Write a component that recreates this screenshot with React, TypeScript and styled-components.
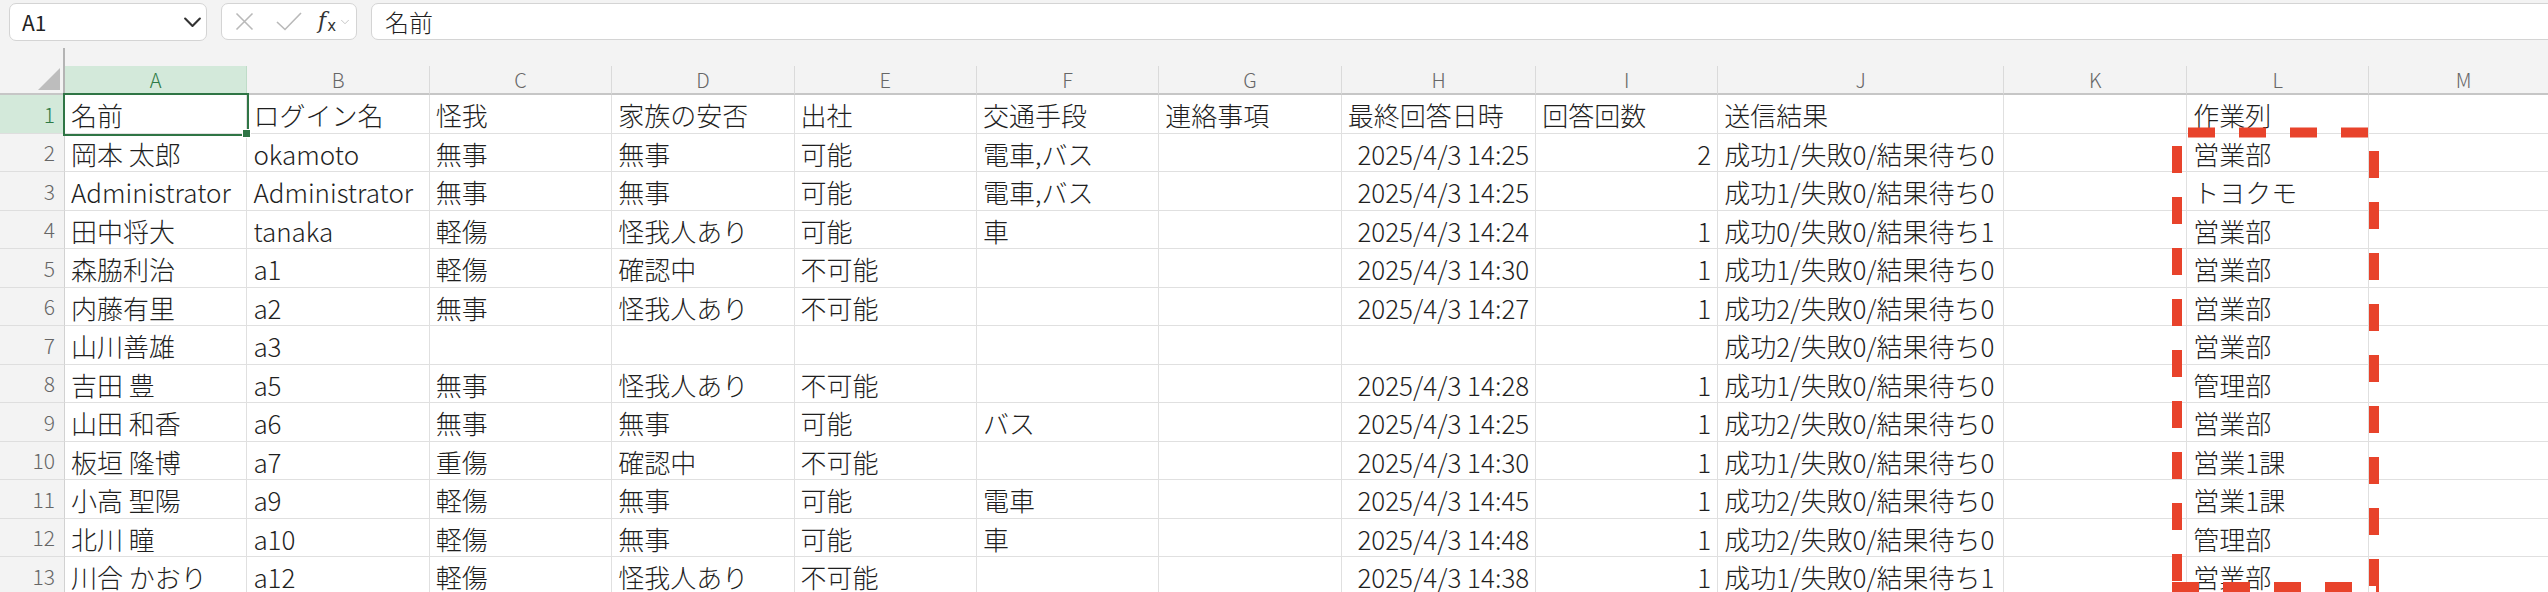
import { FC } from 'react'
import styled, { createGlobalStyle, css } from 'styled-components'

const colors = {
  chrome: '#f3f3f3',
  boxBorder: '#d4d4d4',
  grid: '#e0e0e0',
  headerLine: '#c6c6c6',
  headerText: '#666666',
  text: '#1f1f1f',
  selectBg: '#d3e9da',
  selectText: '#2d7a46',
  selectLine: '#2f7545',
  mark: '#e8432b',
}

const GlobalStyle = createGlobalStyle`
  html, body {
    margin: 0;
    padding: 0;
    background: ${colors.chrome};
  }
  body {
    font-family: "Noto Sans CJK JP", "Noto Sans", sans-serif;
    color: ${colors.text};
  }
`

const COLUMNS = [
  { key: 'A', width: 182.4 },
  { key: 'B', width: 182.4 },
  { key: 'C', width: 182.4 },
  { key: 'D', width: 182.4 },
  { key: 'E', width: 182.4 },
  { key: 'F', width: 182.4 },
  { key: 'G', width: 182.4 },
  { key: 'H', width: 194.5 },
  { key: 'I', width: 182 },
  { key: 'J', width: 286 },
  { key: 'K', width: 183 },
  { key: 'L', width: 182 },
  { key: 'M', width: 190 },
]

const ROWS: string[][] = [
  ['名前', 'ログイン名', '怪我', '家族の安否', '出社', '交通手段', '連絡事項', '最終回答日時', '回答回数', '送信結果', '', '作業列', ''],
  ['岡本 太郎', 'okamoto', '無事', '無事', '可能', '電車,バス', '', '2025/4/3 14:25', '2', '成功1/失敗0/結果待ち0', '', '営業部', ''],
  ['Administrator', 'Administrator', '無事', '無事', '可能', '電車,バス', '', '2025/4/3 14:25', '', '成功1/失敗0/結果待ち0', '', 'トヨクモ', ''],
  ['田中将大', 'tanaka', '軽傷', '怪我人あり', '可能', '車', '', '2025/4/3 14:24', '1', '成功0/失敗0/結果待ち1', '', '営業部', ''],
  ['森脇利治', 'a1', '軽傷', '確認中', '不可能', '', '', '2025/4/3 14:30', '1', '成功1/失敗0/結果待ち0', '', '営業部', ''],
  ['内藤有里', 'a2', '無事', '怪我人あり', '不可能', '', '', '2025/4/3 14:27', '1', '成功2/失敗0/結果待ち0', '', '営業部', ''],
  ['山川善雄', 'a3', '', '', '', '', '', '', '', '成功2/失敗0/結果待ち0', '', '営業部', ''],
  ['吉田 豊', 'a5', '無事', '怪我人あり', '不可能', '', '', '2025/4/3 14:28', '1', '成功1/失敗0/結果待ち0', '', '管理部', ''],
  ['山田 和香', 'a6', '無事', '無事', '可能', 'バス', '', '2025/4/3 14:25', '1', '成功2/失敗0/結果待ち0', '', '営業部', ''],
  ['板垣 隆博', 'a7', '重傷', '確認中', '不可能', '', '', '2025/4/3 14:30', '1', '成功1/失敗0/結果待ち0', '', '営業1課', ''],
  ['小高 聖陽', 'a9', '軽傷', '無事', '可能', '電車', '', '2025/4/3 14:45', '1', '成功2/失敗0/結果待ち0', '', '営業1課', ''],
  ['北川 瞳', 'a10', '軽傷', '無事', '可能', '車', '', '2025/4/3 14:48', '1', '成功2/失敗0/結果待ち0', '', '管理部', ''],
  ['川合 かおり', 'a12', '軽傷', '怪我人あり', '不可能', '', '', '2025/4/3 14:38', '1', '成功1/失敗0/結果待ち1', '', '営業部', ''],
]

const isNumeric = (value: string) => /^[\d/ :]+$/.test(value)

const StyledRoot = styled.div`
  position: relative;
  width: 2548px;
  height: 592px;
  overflow: hidden;
  background: ${colors.chrome};
`

/* formula bar */

const StyledToolbar = styled.div`
  display: flex;
  align-items: flex-start;
  gap: 14px;
  height: 48px;
  padding: 3px 0 0 9px;
  box-sizing: border-box;
`

const StyledBox = styled.div`
  display: flex;
  align-items: center;
  height: 38px;
  box-sizing: border-box;
  background: #ffffff;
  border: 1px solid ${colors.boxBorder};
  border-radius: 7px;
`

const StyledNameBox = styled(StyledBox)`
  width: 198px;
  justify-content: space-between;
  padding: 0 5px 0 12px;
  font-size: 21px;
  color: #222222;
`

const StyledFormulaButtons = styled(StyledBox)`
  width: 136px;
  height: 37px;
  padding: 0 0 0 13px;
  gap: 22px;
`

const StyledFx = styled.span`
  display: flex;
  align-items: center;
  gap: 5px;
  margin-left: -6px;
  color: #333333;

  span {
    font-family: "DejaVu Serif", serif;
    font-style: italic;
    font-size: 22px;
    line-height: 1;
  }

  sub {
    font-family: "DejaVu Sans", sans-serif;
    font-style: normal;
    font-size: 15px;
    vertical-align: -3px;
    margin-left: 1px;
  }
`

const StyledFormulaInput = styled(StyledBox)`
  flex: 1;
  height: 37px;
  margin-right: -20px;
  padding-left: 13px;
  font-size: 24px;
  font-weight: 300;
`

const StyledSplitRow = styled.div`
  height: 18px;
  padding-left: 63px;
`

const StyledSplitBar = styled.div`
  width: 2px;
  height: 100%;
  background: #b4b4b4;
`

/* sheet */

const StyledSheet = styled.div`
  display: grid;
  grid-template-columns: 65px ${COLUMNS.map((c) => `${c.width}px`).join(' ')};
  grid-template-rows: 29px;
  grid-auto-rows: 38.5px;
`

const StyledCorner = styled.div`
  position: relative;
  background: ${colors.chrome};
  border-right: 2px solid #b4b4b4;
  border-bottom: 2px solid ${colors.headerLine};
  box-sizing: border-box;

  &::after {
    content: '';
    position: absolute;
    right: 3px;
    bottom: 3px;
    border-style: solid;
    border-width: 0 0 22px 22px;
    border-color: transparent transparent #bdbdbd transparent;
  }
`

const StyledColHeader = styled.div<{ $selected?: boolean }>`
  display: flex;
  align-items: center;
  justify-content: center;
  box-sizing: border-box;
  font-size: 20px;
  font-weight: 300;
  color: ${colors.headerText};
  background: ${colors.chrome};
  border-right: 1px solid #dadada;
  border-bottom: 2px solid ${colors.headerLine};

  ${({ $selected }) =>
    $selected &&
    css`
      background: ${colors.selectBg};
      color: ${colors.selectText};
      border-right-color: #bfdcc8;
    `}
`

const StyledRowHeader = styled.div<{ $selected?: boolean }>`
  display: flex;
  align-items: center;
  justify-content: flex-end;
  padding-right: 9px;
  box-sizing: border-box;
  font-size: 21px;
  font-weight: 300;
  color: ${colors.headerText};
  background: ${colors.chrome};
  border-right: 1px solid #d2d2d2;
  border-bottom: 1px solid #dedede;

  ${({ $selected }) =>
    $selected &&
    css`
      background: ${colors.selectBg};
      color: ${colors.selectText};
    `}
`

const StyledCell = styled.div<{ $align: 'left' | 'right'; $selected?: boolean }>`
  position: relative;
  display: flex;
  align-items: center;
  justify-content: ${({ $align }) => ($align === 'right' ? 'flex-end' : 'flex-start')};
  padding: 2px 6px 0;
  box-sizing: border-box;
  background: #ffffff;
  border-right: 1px solid ${colors.grid};
  border-bottom: 1px solid ${colors.grid};
  font-size: 26px;
  font-weight: 300;
  white-space: nowrap;
  color: ${colors.text};

  ${({ $selected }) =>
    $selected &&
    css`
      z-index: 2;
      outline: 2px solid ${colors.selectLine};

      &::after {
        content: '';
        position: absolute;
        right: -5px;
        bottom: -5px;
        width: 7px;
        height: 7px;
        background: ${colors.selectLine};
        border: 1px solid #ffffff;
      }
    `}
`

const StyledMarker = styled.svg`
  position: absolute;
  top: 0;
  left: 0;
  z-index: 5;
  pointer-events: none;
`

const ChevronIcon: FC<{ color: string; size: number; stroke: number }> = ({ color, size, stroke }) => (
  <svg width={size} height={size / 2 + 2} viewBox="0 0 16 10" fill="none">
    <path d="M1 1.5 L8 8.5 L15 1.5" stroke={color} strokeWidth={stroke} strokeLinecap="round" strokeLinejoin="round" />
  </svg>
)

const FormulaBar: FC = () => (
  <StyledToolbar>
    <StyledNameBox>
      A1
      <ChevronIcon color="#333333" size={17} stroke={2} />
    </StyledNameBox>
    <StyledFormulaButtons>
      <svg width="19" height="19" viewBox="0 0 19 19" fill="none">
        <path d="M1.5 1.5 L17.5 17.5 M17.5 1.5 L1.5 17.5" stroke="#b9b9b9" strokeWidth="1.6" />
      </svg>
      <svg width="26" height="19" viewBox="0 0 26 19" fill="none">
        <path d="M1 10 L9 17.5 L25 1" stroke="#b9b9b9" strokeWidth="1.6" />
      </svg>
      <StyledFx>
        <span>
          f<sub>x</sub>
        </span>
        <ChevronIcon color="#b9b9b9" size={8} stroke={1.6} />
      </StyledFx>
    </StyledFormulaButtons>
    <StyledFormulaInput>名前</StyledFormulaInput>
  </StyledToolbar>
)

const Marker: FC = () => (
  <StyledMarker width={2548} height={592} viewBox="0 0 2548 592">
    <g stroke={colors.mark} strokeWidth={10} strokeDasharray="27 24" fill="none">
      <line x1={2188} y1={132.5} x2={2379} y2={132.5} />
      <line x1={2177} y1={146} x2={2177} y2={592} />
      <line x1={2374} y1={151} x2={2374} y2={592} />
      <line x1={2172} y1={587} x2={2379} y2={587} />
    </g>
  </StyledMarker>
)

const App: FC = () => (
  <StyledRoot>
    <GlobalStyle />
    <FormulaBar />
    <StyledSplitRow>
      <StyledSplitBar />
    </StyledSplitRow>
    <StyledSheet>
      <StyledCorner />
      {COLUMNS.map((c) => (
        <StyledColHeader key={c.key} $selected={c.key === 'A'}>
          {c.key}
        </StyledColHeader>
      ))}
      {ROWS.map((row, r) => [
        <StyledRowHeader key={`h${r}`} $selected={r === 0}>
          {r + 1}
        </StyledRowHeader>,
        ...row.map((value, c) => (
          <StyledCell
            key={`${r}-${c}`}
            $align={isNumeric(value) ? 'right' : 'left'}
            $selected={r === 0 && c === 0}
          >
            {value}
          </StyledCell>
        )),
      ])}
    </StyledSheet>
    <Marker />
  </StyledRoot>
)

export default App
